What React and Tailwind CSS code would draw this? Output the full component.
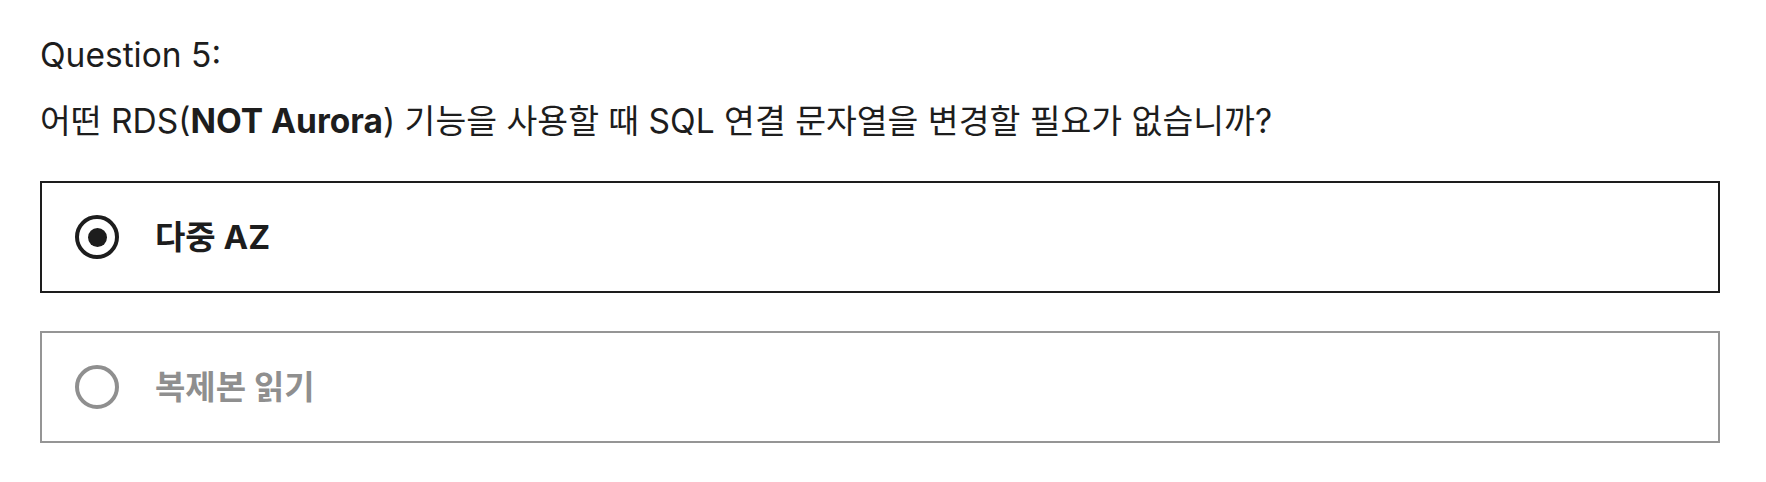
const options = [
  { id: 'multi-az', label: '다중 AZ', selected: true },
  { id: 'read-replica', label: '복제본 읽기', selected: false },
];

function Radio({ selected }) {
  return (
    <span
      className={`flex h-[44px] w-[44px] shrink-0 items-center justify-center rounded-full border-4 ${
        selected ? 'border-[#1d1d1d]' : 'border-[#8f8f8f]'
      }`}
    >
      {selected && <span className="block h-[19px] w-[19px] rounded-full bg-[#1d1d1d]" />}
    </span>
  );
}

export default function App() {
  return (
    <div
      className="min-h-screen bg-white pl-10 pt-[31px] text-[#1d1d1d]"
      style={{ fontFamily: 'Inter, "Noto Sans CJK KR", sans-serif' }}
    >
      <p className="text-[33.5px] leading-[48px]">Question 5:</p>
      <p className="mt-[18px] text-[33.5px] leading-[48px]">
        어떤 RDS(<strong className="font-bold">NOT Aurora</strong>) 기능을 사용할 때 SQL 연결 문자열을 변경할 필요가 없습니까?
      </p>

      <div className="mt-[36px] flex w-[1680px] flex-col gap-[38px]">
        {options.map((opt) => (
          <label
            key={opt.id}
            className={`flex h-[112px] items-center border-2 pl-[33px] ${
              opt.selected ? 'border-[#1d1d1d] text-[#1d1d1d]' : 'border-[#959595] text-[#8f8f8f]'
            }`}
          >
            <Radio selected={opt.selected} />
            <span className="ml-[36px] text-[33px] font-bold leading-[48px]">{opt.label}</span>
          </label>
        ))}
      </div>
    </div>
  );
}
